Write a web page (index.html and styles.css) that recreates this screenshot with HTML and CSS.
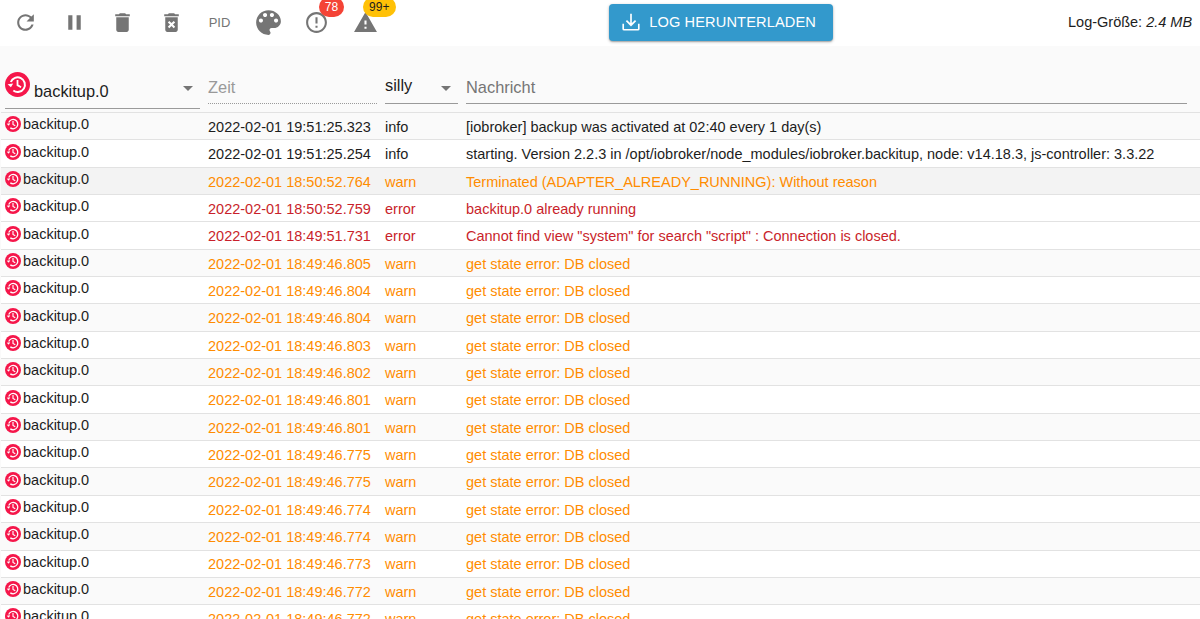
FILE: index.html
```html
<!DOCTYPE html>
<html lang="de">
<head>
<meta charset="utf-8">
<title>Log</title>
<link rel="stylesheet" href="styles.css">
</head>
<body>
<svg class="defs" width="0" height="0">
  <symbol id="app" viewBox="0 0 24 24">
    <circle cx="12" cy="12" r="12" fill="#f5164a"/>
    <path d="M5.6 9.6A7 7 0 1 1 8 17.8" fill="none" stroke="#fff" stroke-width="1.9"/>
    <path d="M2.6 11.4h5.4l-2.7 3.4z" fill="#fff" transform="rotate(-8 5 12)"/>
    <path d="M12 7.6v5l3.4 2" fill="none" stroke="#fff" stroke-width="1.7"/>
  </symbol>
</svg>
<div class="toolbar">
  <button class="tool"><svg viewBox="0 0 24 24"><path d="M17.65 6.35C16.2 4.9 14.21 4 12 4c-4.42 0-7.99 3.58-7.99 8s3.57 8 7.99 8c3.73 0 6.84-2.55 7.73-6h-2.08c-.82 2.33-3.04 4-5.65 4-3.31 0-6-2.69-6-6s2.69-6 6-6c1.66 0 3.14.69 4.22 1.78L13 11h7V4l-2.35 2.35z"/></svg></button>
  <button class="tool"><svg viewBox="0 0 24 24"><path d="M6 19h4V5H6v14zm8-14v14h4V5h-4z"/></svg></button>
  <button class="tool"><svg viewBox="0 0 24 24"><path d="M6 19c0 1.1.9 2 2 2h8c1.1 0 2-.9 2-2V7H6v12zM19 4h-3.5l-1-1h-5l-1 1H5v2h14V4z"/></svg></button>
  <button class="tool"><svg viewBox="0 0 24 24"><path d="M6 19c0 1.1.9 2 2 2h8c1.1 0 2-.9 2-2V7H6v12zm2.46-7.12l1.41-1.41L12 12.59l2.12-2.12 1.41 1.41L13.41 14l2.12 2.12-1.41 1.41L12 15.41l-2.12 2.12-1.41-1.41L10.59 14l-2.13-2.12zM15.5 4l-1-1h-5l-1 1H5v2h14V4z"/></svg></button>
  <button class="tool tool-text">PID</button>
  <button class="tool"><svg class="palette" viewBox="0 0 24 24"><path d="M12 3c-4.97 0-9 4.03-9 9s4.03 9 9 9c.83 0 1.5-.67 1.5-1.5 0-.39-.15-.74-.39-1.01-.23-.26-.38-.61-.38-.99 0-.83.67-1.5 1.5-1.5H16c2.76 0 5-2.24 5-5 0-4.42-4.03-8-9-8zm-5.5 9c-.83 0-1.5-.67-1.5-1.5S5.67 9 6.5 9 8 9.67 8 10.5 7.33 12 6.5 12zm3-4C8.67 8 8 7.33 8 6.5S8.67 5 9.5 5s1.5.67 1.5 1.5S10.33 8 9.5 8zm5 0c-.83 0-1.5-.67-1.5-1.5S13.67 5 14.5 5s1.5.67 1.5 1.5S15.33 8 14.5 8zm3 4c-.83 0-1.5-.67-1.5-1.5S16.67 9 17.5 9s1.5.67 1.5 1.5-.67 1.5-1.5 1.5z"/></svg></button>
  <button class="tool"><svg viewBox="0 0 24 24"><path d="M11 15h2v2h-2zm0-8h2v6h-2zm.99-5C6.47 2 2 6.48 2 12s4.47 10 9.99 10C17.52 22 22 17.52 22 12S17.52 2 11.99 2zM12 20c-4.42 0-8-3.58-8-8s3.58-8 8-8 8 3.58 8 8-3.58 8-8 8z"/></svg><span class="badge badge-red">78</span></button>
  <button class="tool"><svg viewBox="0 0 24 24"><path d="M1 21h22L12 2 1 21zm12-3h-2v-2h2v2zm0-4h-2v-4h2v4z"/></svg><span class="badge badge-amber">99+</span></button>
  <div class="toolbar-mid">
    <button class="download">
      <svg viewBox="0 0 24 24"><path d="M12 3v12M7 10.5l5 5 5-5M3.5 14v5.5a1 1 0 0 0 1 1h15a1 1 0 0 0 1-1V14" fill="none" stroke="#fff" stroke-width="1.8"/></svg>
      <span>LOG HERUNTERLADEN</span>
    </button>
  </div>
  <div class="size">Log-Größe: <em>2.4 MB</em></div>
</div>
<main class="log">
  <div class="filters">
    <div class="f-source"><svg class="app-large"><use href="#app"/></svg><span class="f-source-text">backitup.0</span><i class="caret"></i></div>
    <div class="f-time">Zeit</div>
    <div class="f-level"><span>silly</span><i class="caret"></i></div>
    <div class="f-msg">Nachricht</div>
  </div>
  <div class="rows">
    <div class="row shade"><div class="src"><svg class="app"><use href="#app"/></svg>backitup.0</div><div>2022-02-01 19:51:25.323</div><div>info</div><div>[iobroker] backup was activated at 02:40 every 1 day(s)</div></div>
    <div class="row"><div class="src"><svg class="app"><use href="#app"/></svg>backitup.0</div><div>2022-02-01 19:51:25.254</div><div>info</div><div>starting. Version 2.2.3 in /opt/iobroker/node_modules/iobroker.backitup, node: v14.18.3, js-controller: 3.3.22</div></div>
    <div class="row shade-dark warn"><div class="src"><svg class="app"><use href="#app"/></svg>backitup.0</div><div>2022-02-01 18:50:52.764</div><div>warn</div><div>Terminated (ADAPTER_ALREADY_RUNNING): Without reason</div></div>
    <div class="row err"><div class="src"><svg class="app"><use href="#app"/></svg>backitup.0</div><div>2022-02-01 18:50:52.759</div><div>error</div><div>backitup.0 already running</div></div>
    <div class="row err"><div class="src"><svg class="app"><use href="#app"/></svg>backitup.0</div><div>2022-02-01 18:49:51.731</div><div>error</div><div>Cannot find view "system" for search "script" : Connection is closed.</div></div>
    <div class="row shade warn"><div class="src"><svg class="app"><use href="#app"/></svg>backitup.0</div><div>2022-02-01 18:49:46.805</div><div>warn</div><div>get state error: DB closed</div></div>
    <div class="row warn"><div class="src"><svg class="app"><use href="#app"/></svg>backitup.0</div><div>2022-02-01 18:49:46.804</div><div>warn</div><div>get state error: DB closed</div></div>
    <div class="row shade warn"><div class="src"><svg class="app"><use href="#app"/></svg>backitup.0</div><div>2022-02-01 18:49:46.804</div><div>warn</div><div>get state error: DB closed</div></div>
    <div class="row warn"><div class="src"><svg class="app"><use href="#app"/></svg>backitup.0</div><div>2022-02-01 18:49:46.803</div><div>warn</div><div>get state error: DB closed</div></div>
    <div class="row shade warn"><div class="src"><svg class="app"><use href="#app"/></svg>backitup.0</div><div>2022-02-01 18:49:46.802</div><div>warn</div><div>get state error: DB closed</div></div>
    <div class="row warn"><div class="src"><svg class="app"><use href="#app"/></svg>backitup.0</div><div>2022-02-01 18:49:46.801</div><div>warn</div><div>get state error: DB closed</div></div>
    <div class="row shade warn"><div class="src"><svg class="app"><use href="#app"/></svg>backitup.0</div><div>2022-02-01 18:49:46.801</div><div>warn</div><div>get state error: DB closed</div></div>
    <div class="row warn"><div class="src"><svg class="app"><use href="#app"/></svg>backitup.0</div><div>2022-02-01 18:49:46.775</div><div>warn</div><div>get state error: DB closed</div></div>
    <div class="row shade warn"><div class="src"><svg class="app"><use href="#app"/></svg>backitup.0</div><div>2022-02-01 18:49:46.775</div><div>warn</div><div>get state error: DB closed</div></div>
    <div class="row warn"><div class="src"><svg class="app"><use href="#app"/></svg>backitup.0</div><div>2022-02-01 18:49:46.774</div><div>warn</div><div>get state error: DB closed</div></div>
    <div class="row shade warn"><div class="src"><svg class="app"><use href="#app"/></svg>backitup.0</div><div>2022-02-01 18:49:46.774</div><div>warn</div><div>get state error: DB closed</div></div>
    <div class="row warn"><div class="src"><svg class="app"><use href="#app"/></svg>backitup.0</div><div>2022-02-01 18:49:46.773</div><div>warn</div><div>get state error: DB closed</div></div>
    <div class="row shade warn"><div class="src"><svg class="app"><use href="#app"/></svg>backitup.0</div><div>2022-02-01 18:49:46.772</div><div>warn</div><div>get state error: DB closed</div></div>
    <div class="row warn"><div class="src"><svg class="app"><use href="#app"/></svg>backitup.0</div><div>2022-02-01 18:49:46.772</div><div>warn</div><div>get state error: DB closed</div></div>
  </div>
</main>
</body>
</html>
```
FILE: styles.css
```css
* { box-sizing: border-box; }
html, body { margin: 0; height: 100%; overflow: hidden; }
body {
  width: 1200px;
  height: 619px;
  background: #fff;
  color: #1d1d1d;
  font-family: "Liberation Sans", Arial, sans-serif;
  display: flex;
  flex-direction: column;
}
.defs { position: absolute; }

.toolbar {
  height: 46px;
  flex: none;
  display: flex;
  align-items: center;
  padding: 0 8px 2px 1.25px;
}
.tool {
  width: 48.5px;
  height: 44px;
  flex: none;
  position: relative;
  border: 0;
  padding: 0;
  background: none;
  display: flex;
  align-items: center;
  justify-content: center;
  color: #757575;
  font: 13px "Liberation Sans", Arial, sans-serif;
}
.tool svg { width: 25px; height: 25px; fill: #757575; flex: none; }
.tool .palette { width: 33px; height: 33px; }
.badge {
  position: absolute;
  top: -3px;
  height: 20px;
  border-radius: 10px;
  font-size: 12px;
  line-height: 20px;
  text-align: center;
}
.badge-red { left: 26.75px; width: 25px; background: #f44336; color: #fff; }
.badge-amber { left: 22px; width: 33px; background: #ffc107; color: #1d1d1d; }

.toolbar-mid {
  flex: 1;
  display: flex;
  padding-left: 220px;
}
.download {
  width: 224px;
  height: 37px;
  border: 0;
  border-radius: 4px;
  background: #3399cc;
  color: #fff;
  display: flex;
  align-items: center;
  justify-content: flex-start;
  gap: 7px;
  padding: 0 0 0 11px;
  font: 14.6px "Liberation Sans", Arial, sans-serif;
  letter-spacing: 0.12px;
  box-shadow: 0 1px 3px rgba(0,0,0,.3), 0 1px 1px rgba(0,0,0,.14);
}
.download svg { width: 22px; height: 22px; }
.size { font-size: 14.5px; width: 124px; flex: none; white-space: nowrap; }

.log {
  flex: 1;
  min-height: 0;
  background: #fafafa;
  overflow: hidden;
  padding-top: 22px;
}
.filters {
  height: 44px;
  display: grid;
  grid-template-columns: 195px 169px 73px 721px;
  column-gap: 8px;
  align-items: start;
  margin-left: 5px;
  font-size: 16.4px;
}
.f-source, .f-level { position: relative; display: flex; border-bottom: 1px solid #9a9a9a; }
.f-source { height: 41px; align-items: flex-end; padding: 0 0 7px 29px; }
.f-source-text { line-height: 20px; }
.app-large { position: absolute; left: 0; top: 4px; width: 25px; height: 25px; }
.caret {
  position: absolute;
  width: 0;
  height: 0;
  border-left: 5px solid transparent;
  border-right: 5px solid transparent;
  border-top: 5px solid #757575;
}
.f-source .caret { right: 7px; top: 18px; }
.f-time {
  color: #999;
  border-bottom: 1px dotted #9a9a9a;
  margin-top: 9px;
  height: 27px;
  line-height: 21px;
}
.f-level { height: 36px; align-items: center; }
.f-level .caret { right: 7px; top: 18px; }
.f-msg {
  color: #757575;
  border-bottom: 1px solid #9a9a9a;
  height: 36px;
  padding-top: 9px;
  line-height: 21px;
}

.rows { border-top: 1px solid #e2e2e2; margin-left: 1px; font-size: 14.5px; }
.row {
  height: 27.35px;
  display: grid;
  grid-template-columns: 203px 177px 81px 1fr;
  align-items: center;
  padding: 0 0 0 4px;
  background: #fff;
  border-bottom: 1px solid #e2e2e2;
  white-space: nowrap;
  color: #1d1d1d;
}
.row.shade { background: #fafafa; }
.row.shade-dark { background: #f3f3f3; }
.row > div { padding-top: 1.5px; }
.row > .src { display: flex; align-items: center; padding-top: 0; position: relative; top: -2px; color: #1d1d1d; }
.app { width: 16px; height: 16px; margin-right: 2px; flex: none; }
.warn { color: #ff8c00; }
.err { color: #c91f2b; }
```
